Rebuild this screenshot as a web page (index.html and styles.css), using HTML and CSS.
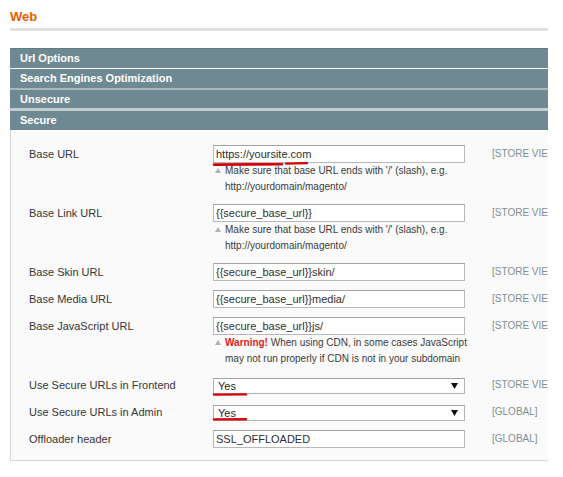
FILE: index.html
```html
<!DOCTYPE html>
<html lang="en">
<head>
<meta charset="utf-8">
<title>Web - Configuration</title>
<link rel="stylesheet" href="styles.css">
</head>
<body>
<div class="screen">
  <div class="viewport">
    <div class="content-header"><h3>Web</h3></div>
    <div class="sections">
      <div class="section-head first">Url Options</div>
      <div class="section-head second">Search Engines Optimization</div>
      <div class="section-head third">Unsecure</div>
      <div class="section-head fourth">Secure</div>
      <fieldset class="config">
        <table class="form-list">
          <colgroup><col class="c-label"><col class="c-value"><col class="c-scope"></colgroup>
          <tbody>
            <tr>
              <td class="label">Base URL</td>
              <td class="value">
                <input class="input-text" type="text" value="https://yoursite.com">
                <p class="note">Make sure that base URL ends with '/' (slash), e.g. http://yourdomain/magento/</p>
              </td>
              <td class="scope">[STORE VIEW]</td>
            </tr>
            <tr>
              <td class="label">Base Link URL</td>
              <td class="value">
                <input class="input-text" type="text" value="{{secure_base_url}}">
                <p class="note">Make sure that base URL ends with '/' (slash), e.g. http://yourdomain/magento/</p>
              </td>
              <td class="scope">[STORE VIEW]</td>
            </tr>
            <tr>
              <td class="label">Base Skin URL</td>
              <td class="value"><input class="input-text" type="text" value="{{secure_base_url}}skin/"></td>
              <td class="scope">[STORE VIEW]</td>
            </tr>
            <tr>
              <td class="label">Base Media URL</td>
              <td class="value"><input class="input-text" type="text" value="{{secure_base_url}}media/"></td>
              <td class="scope">[STORE VIEW]</td>
            </tr>
            <tr>
              <td class="label">Base JavaScript URL</td>
              <td class="value">
                <input class="input-text" type="text" value="{{secure_base_url}}js/">
                <p class="note"><strong class="warn">Warning!</strong> When using CDN, in some cases JavaScript may not run properly if CDN is not in your subdomain</p>
              </td>
              <td class="scope">[STORE VIEW]</td>
            </tr>
            <tr>
              <td class="label">Use Secure URLs in Frontend</td>
              <td class="value">
                <div class="select"><span>Yes</span><svg class="arrow" width="7" height="6" viewBox="0 0 7 6"><path d="M0 0H7L3.5 6Z" fill="#111"/></svg></div>
              </td>
              <td class="scope">[STORE VIEW]</td>
            </tr>
            <tr>
              <td class="label">Use Secure URLs in Admin</td>
              <td class="value">
                <div class="select"><span>Yes</span><svg class="arrow" width="7" height="6" viewBox="0 0 7 6"><path d="M0 0H7L3.5 6Z" fill="#111"/></svg></div>
              </td>
              <td class="scope">[GLOBAL]</td>
            </tr>
            <tr>
              <td class="label">Offloader header</td>
              <td class="value"><input class="input-text" type="text" value="SSL_OFFLOADED"></td>
              <td class="scope">[GLOBAL]</td>
            </tr>
          </tbody>
        </table>
      </fieldset>
    </div>
  </div>
  <svg class="marks" width="563" height="477" viewBox="0 0 563 477">
    <g fill="none" stroke="#d6000d" stroke-linecap="round">
      <path d="M214 164.6 L282 164.2" stroke-width="2.6"/>
      <path d="M286 163.6 L307 163.2" stroke-width="2.2"/>
      <path d="M214 394.6 L246 394.4" stroke-width="2.4"/>
      <path d="M214 419.4 L246 419.2" stroke-width="2.4"/>
    </g>
  </svg>
</div>
</body>
</html>
```

FILE: styles.css
```css
html, body {
  margin: 0;
  padding: 0;
  background: #ffffff;
}

body {
  font-family: "Liberation Sans", Arial, sans-serif;
  font-size: 11px;
  color: #333333;
}

.screen {
  position: relative;
  width: 563px;
  height: 477px;
  overflow: hidden;
}

.viewport {
  margin-left: 10px;
  width: 538px;
  overflow: hidden;
}

.content-header {
  padding: 9px 0 3px;
  border-bottom: 3px solid #e0e0e0;
}

.content-header h3 {
  margin: 0;
  font-size: 13px;
  line-height: 16px;
  font-weight: bold;
  color: #eb5e00;
}

.sections {
  margin-top: 17px;
}

.section-head {
  background: #6f8992;
  color: #ffffff;
  font-weight: bold;
  font-size: 11px;
  padding-left: 10px;
  white-space: nowrap;
}

.section-head.first {
  line-height: 20px;
  box-shadow: inset 0 1px 0 #627c85;
}

.section-head.second {
  line-height: 19px;
  border-top: 1px solid #ffffff;
}

.section-head.third {
  line-height: 18px;
  border-top: 2px solid #a9b8bd;
}

.section-head.fourth {
  line-height: 19px;
  border-top: 3px solid #c3ccd0;
}

.config {
  margin: 0;
  min-width: 0;
  padding: 11px 0 7px 18px;
  background: #fafafa;
  border: 0;
  border-left: 1px solid #d6d6d6;
  border-bottom: 1px solid #d9d9d9;
}

.form-list {
  table-layout: fixed;
  width: 570px;
  border-collapse: collapse;
  border-spacing: 0;
}

.c-label { width: 184px; }
.c-value { width: 279px; }
.c-scope { width: 107px; }

.form-list td {
  padding: 4px 0 5px;
  vertical-align: top;
}

.form-list td.label {
  line-height: 18px;
  color: #363636;
  white-space: nowrap;
}

.form-list td.scope {
  line-height: 18px;
  font-size: 10px;
  color: #7f8f96;
  white-space: nowrap;
}

.input-text {
  display: block;
  box-sizing: border-box;
  width: 252px;
  height: 18px;
  margin: 0;
  padding: 0 2px;
  border: 1px solid #b8b8b8;
  border-top-color: #a3a3a3;
  background: #ffffff;
  font-family: "Liberation Sans", Arial, sans-serif;
  font-size: 11px;
  color: #2f2f2f;
}

.note {
  box-sizing: border-box;
  width: 262px;
  margin: 0;
  padding-left: 12px;
  font-size: 10px;
  line-height: 16px;
  color: #3a3a3a;
}

.note::before {
  content: "";
  display: inline-block;
  width: 0;
  height: 0;
  border-left: 3px solid transparent;
  border-right: 3px solid transparent;
  border-bottom: 5px solid #aab3b6;
  margin-left: -10px;
  margin-right: 4px;
  vertical-align: 1px;
}

.warn {
  color: #e21c1c;
  font-weight: bold;
}

.select {
  box-sizing: border-box;
  width: 252px;
  height: 16px;
  margin-top: 2px;
  padding: 0 6px 0 4px;
  display: flex;
  align-items: center;
  justify-content: space-between;
  border: 1px solid #b3b3b3;
  border-top-color: #a3a3a3;
  background: #ffffff;
  font-size: 11px;
  color: #2a2a2a;
}

.arrow {
  display: block;
}

.marks {
  position: absolute;
  left: 0;
  top: 0;
  pointer-events: none;
}
```
